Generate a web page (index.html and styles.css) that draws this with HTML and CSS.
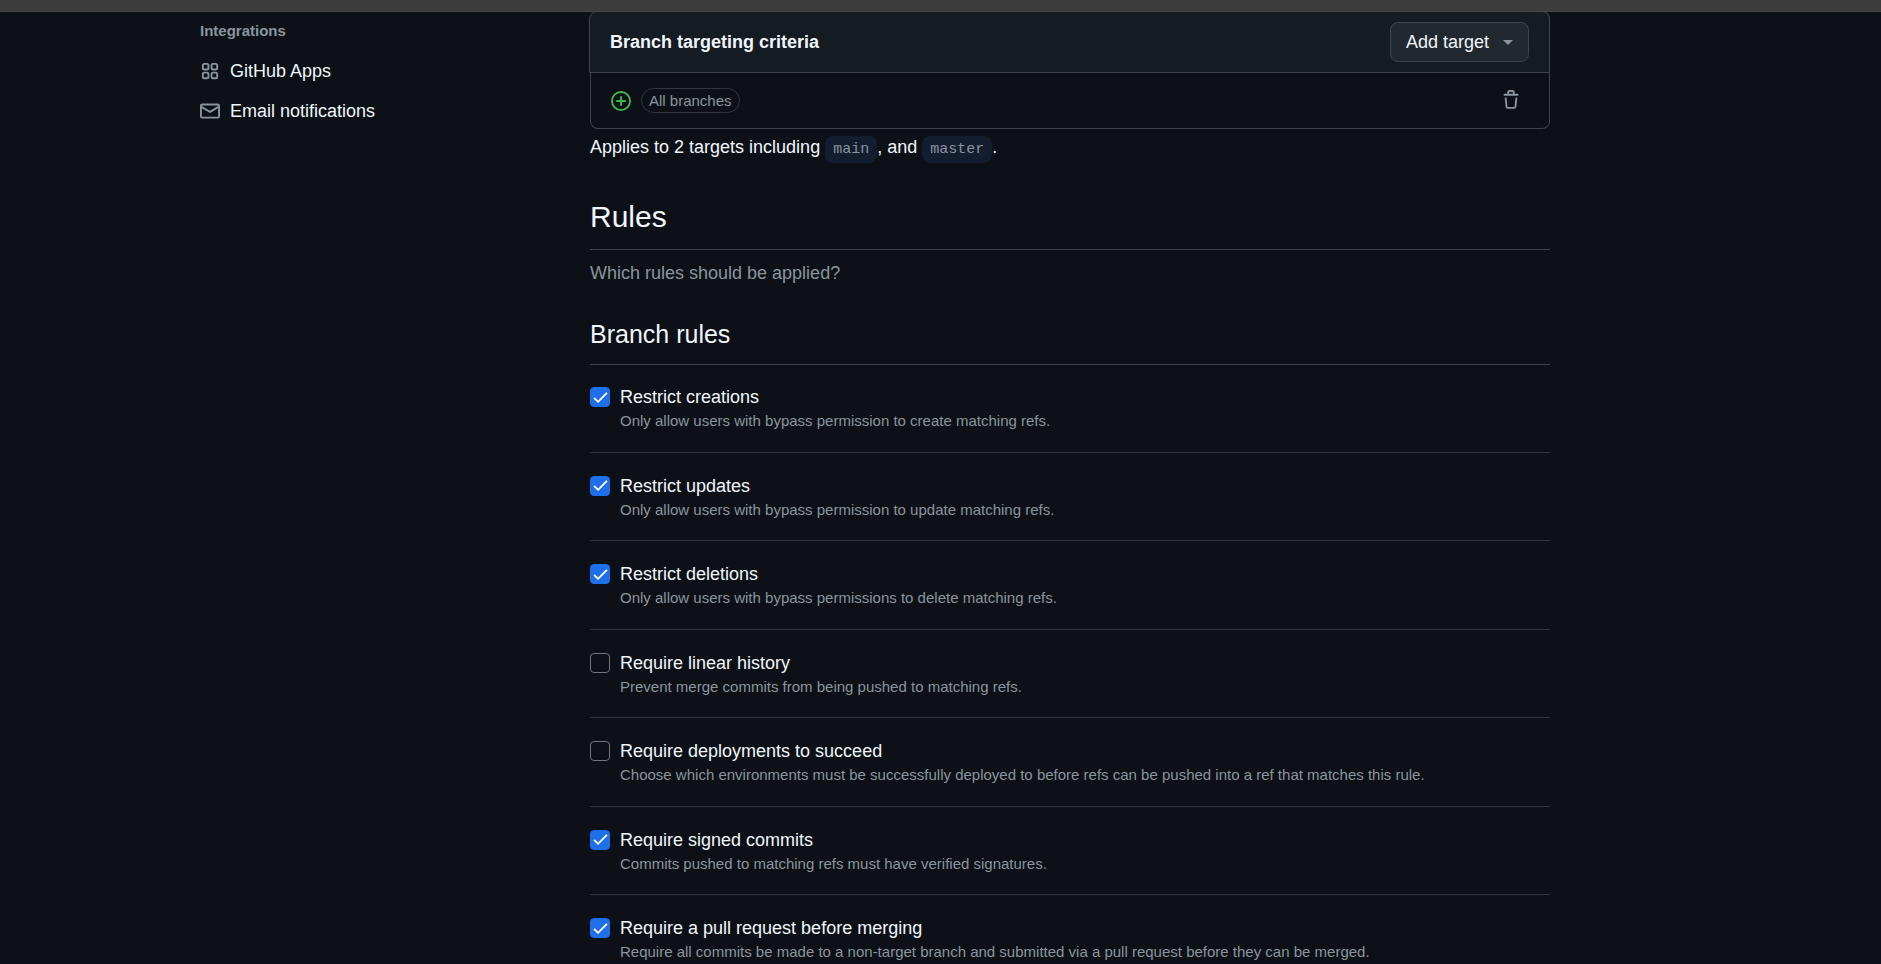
FILE: index.html
```html
<!DOCTYPE html>
<html lang="en">
<head>
<meta charset="utf-8">
<meta name="viewport" content="width=device-width, initial-scale=1">
<title>Rulesets</title>
<link rel="stylesheet" href="styles.css">
</head>
<body>
<div class="topbar"></div>
<div class="layout">
  <nav class="sidebar" aria-labelledby="nav-title">
    <h2 class="nav-title" id="nav-title">Integrations</h2>
    <ul class="nav-list">
      <li><a class="nav-item" href="#apps">
        <svg class="icon" viewBox="0 0 16 16" aria-hidden="true"><path d="M1.5 3.25c0-.966.784-1.75 1.75-1.75h2.5c.966 0 1.75.784 1.75 1.75v2.5A1.75 1.75 0 0 1 5.75 7.5h-2.5A1.75 1.75 0 0 1 1.5 5.75Zm7 0c0-.966.784-1.75 1.75-1.75h2.5c.966 0 1.75.784 1.75 1.75v2.5a1.75 1.75 0 0 1-1.75 1.75h-2.5A1.75 1.75 0 0 1 8.5 5.75Zm-7 7c0-.966.784-1.75 1.75-1.75h2.5c.966 0 1.75.784 1.75 1.75v2.5a1.75 1.75 0 0 1-1.75 1.75h-2.5a1.75 1.75 0 0 1-1.75-1.75Zm7 0c0-.966.784-1.75 1.75-1.75h2.5c.966 0 1.75.784 1.75 1.75v2.5a1.75 1.75 0 0 1-1.75 1.75h-2.5a1.75 1.75 0 0 1-1.75-1.75ZM3.25 3a.25.25 0 0 0-.25.25v2.5c0 .138.112.25.25.25h2.5A.25.25 0 0 0 6 5.75v-2.5A.25.25 0 0 0 5.75 3Zm7 0a.25.25 0 0 0-.25.25v2.5c0 .138.112.25.25.25h2.5a.25.25 0 0 0 .25-.25v-2.5a.25.25 0 0 0-.25-.25Zm-7 7a.25.25 0 0 0-.25.25v2.5c0 .138.112.25.25.25h2.5a.25.25 0 0 0 .25-.25v-2.5a.25.25 0 0 0-.25-.25Zm7 0a.25.25 0 0 0-.25.25v2.5c0 .138.112.25.25.25h2.5a.25.25 0 0 0 .25-.25v-2.5a.25.25 0 0 0-.25-.25Z"/></svg>
        <span>GitHub Apps</span></a></li>
      <li><a class="nav-item" href="#email">
        <svg class="icon" viewBox="0 0 16 16" aria-hidden="true"><path d="M1.75 2h12.5c.966 0 1.75.784 1.75 1.75v8.5A1.75 1.75 0 0 1 14.25 14H1.75A1.75 1.75 0 0 1 0 12.25v-8.5C0 2.784.784 2 1.75 2ZM1.5 12.251c0 .138.112.25.25.25h12.5a.25.25 0 0 0 .25-.25V5.809L8.38 9.397a.75.75 0 0 1-.76 0L1.5 5.809v6.442Zm13-8.181v-.32a.25.25 0 0 0-.25-.25H1.75a.25.25 0 0 0-.25.25v.32L8 7.88Z"/></svg>
        <span>Email notifications</span></a></li>
    </ul>
  </nav>

  <main class="content">
    <section class="targets">
      <header class="targets-header">
        <h3 class="targets-title">Branch targeting criteria</h3>
        <button class="button" type="button">Add target<span class="caret"></span></button>
      </header>
      <div class="target">
        <svg class="icon icon-include" viewBox="0 0 16 16" aria-hidden="true"><path d="M8 0a8 8 0 1 1 0 16A8 8 0 0 1 8 0ZM1.5 8a6.5 6.5 0 1 0 13 0 6.5 6.5 0 0 0-13 0Zm7.25-3.25v2.5h2.5a.75.75 0 0 1 0 1.5h-2.5v2.5a.75.75 0 0 1-1.5 0v-2.5h-2.5a.75.75 0 0 1 0-1.5h2.5v-2.5a.75.75 0 0 1 1.5 0Z"/></svg>
        <span class="label">All branches</span>
        <button class="icon-button" type="button" aria-label="Delete target">
          <svg class="icon" viewBox="0 0 16 16" aria-hidden="true"><path d="M11 1.75V3h2.25a.75.75 0 0 1 0 1.5H2.75a.75.75 0 0 1 0-1.5H5V1.75C5 .784 5.784 0 6.75 0h2.5C10.216 0 11 .784 11 1.75ZM4.496 6.675l.66 6.6a.25.25 0 0 0 .249.225h5.19a.25.25 0 0 0 .249-.225l.66-6.6a.75.75 0 0 1 1.492.149l-.66 6.6A1.748 1.748 0 0 1 10.595 15h-5.19a1.75 1.75 0 0 1-1.741-1.575l-.66-6.6a.75.75 0 1 1 1.492-.15ZM6.5 1.75V3h3V1.75a.25.25 0 0 0-.25-.25h-2.5a.25.25 0 0 0-.25.25Z"/></svg>
        </button>
      </div>
    </section>
    <p class="applies">Applies to 2 targets including <code class="branch">main</code>, and <code class="branch">master</code>.</p>

    <h1 class="heading">Rules</h1>
    <p class="subtitle">Which rules should be applied?</p>

    <h2 class="subheading">Branch rules</h2>
    <ul class="rules">
      <li class="rule">
        <input class="check" type="checkbox" id="creations" aria-describedby="creations-note" checked>
        <div><label class="rule-name" for="creations">Restrict creations</label>
        <p class="note" id="creations-note">Only allow users with bypass permission to create matching refs.</p></div>
      </li>
      <li class="rule">
        <input class="check" type="checkbox" id="updates" aria-describedby="updates-note" checked>
        <div><label class="rule-name" for="updates">Restrict updates</label>
        <p class="note" id="updates-note">Only allow users with bypass permission to update matching refs.</p></div>
      </li>
      <li class="rule">
        <input class="check" type="checkbox" id="deletions" aria-describedby="deletions-note" checked>
        <div><label class="rule-name" for="deletions">Restrict deletions</label>
        <p class="note" id="deletions-note">Only allow users with bypass permissions to delete matching refs.</p></div>
      </li>
      <li class="rule">
        <input class="check" type="checkbox" id="linear" aria-describedby="linear-note">
        <div><label class="rule-name" for="linear">Require linear history</label>
        <p class="note" id="linear-note">Prevent merge commits from being pushed to matching refs.</p></div>
      </li>
      <li class="rule">
        <input class="check" type="checkbox" id="deployments" aria-describedby="deployments-note">
        <div><label class="rule-name" for="deployments">Require deployments to succeed</label>
        <p class="note" id="deployments-note">Choose which environments must be successfully deployed to before refs can be pushed into a ref that matches this rule.</p></div>
      </li>
      <li class="rule">
        <input class="check" type="checkbox" id="signed" aria-describedby="signed-note" checked>
        <div><label class="rule-name" for="signed">Require signed commits</label>
        <p class="note" id="signed-note">Commits pushed to matching refs must have verified signatures.</p></div>
      </li>
      <li class="rule">
        <input class="check" type="checkbox" id="pull" aria-describedby="pull-note" checked>
        <div><label class="rule-name" for="pull">Require a pull request before merging</label>
        <p class="note" id="pull-note">Require all commits be made to a non-target branch and submitted via a pull request before they can be merged.</p></div>
      </li>
    </ul>
  </main>
</div>
</body>
</html>
```

FILE: styles.css
```css
:root {
  --bg: #0d1117;
  --bg-subtle: #151b22;
  --fg: #f0f6fc;
  --fg-muted: #8b949e;
  --border: #3d444d;
  --border-muted: #30363d;
  --success: #3fb950;
  --accent: #1f6feb;
}

* {
  box-sizing: border-box;
}

html {
  background: var(--bg);
  scrollbar-width: none;
}

body {
  margin: 0;
  background: var(--bg);
  color: var(--fg);
  font-family: "Liberation Sans", Arial, sans-serif;
  font-size: 18px;
  line-height: 26px;
}

h1, h2, h3, p, ul {
  margin: 0;
  padding: 0;
}

ul {
  list-style: none;
}

.topbar {
  position: sticky;
  top: 0;
  z-index: 1;
  height: 12px;
  background: #3c3c3c;
  border-bottom: 1px solid #474747;
}

.layout {
  display: grid;
  grid-template-columns: 370px minmax(0, 960px);
  column-gap: 40px;
  max-width: 1601px;
  margin: 0 auto;
  padding: 0 40px;
}

.icon {
  flex: none;
  width: 20px;
  height: 20px;
  fill: currentColor;
}

/* Sidebar */

.sidebar {
  padding: 7px 20px;
}

.nav-title {
  margin-bottom: 9px;
  color: var(--fg-muted);
  font-size: 15px;
  line-height: 23px;
}

.nav-item {
  display: flex;
  align-items: center;
  gap: 10px;
  height: 40px;
  color: var(--fg);
  text-decoration: none;
}

.nav-item .icon {
  color: var(--fg-muted);
}

/* Targets */

.targets {
  margin-top: -1px;
  border: 1px solid var(--border);
  border-top: 0;
  border-radius: 8px;
}

.targets-header {
  display: flex;
  align-items: center;
  justify-content: space-between;
  margin: 0 -1px 0 -2px;
  padding: 10px 20px;
  background: var(--bg-subtle);
  border: 1px solid var(--border);
  border-radius: 8px 8px 0 0;
}

.targets-title {
  font-size: 18px;
}

.button {
  display: flex;
  align-items: center;
  gap: 14px;
  height: 40px;
  padding: 0 15px;
  background: #21282f;
  border: 1px solid var(--border);
  border-radius: 8px;
  color: var(--fg);
  font: inherit;
}

.caret {
  border: 5px solid transparent;
  border-top-color: var(--fg-muted);
  border-bottom: 0;
}

.target {
  display: flex;
  align-items: center;
  gap: 10px;
  height: 55px;
  padding: 0 20px;
}

.icon-include {
  color: var(--success);
}

.label {
  padding: 0 7px;
  border: 1px solid #30363d;
  border-radius: 24px;
  color: var(--fg-muted);
  font-size: 15px;
  line-height: 23px;
}

.icon-button {
  display: flex;
  margin-left: auto;
  padding: 7px 8px 9px;
  background: none;
  border: 0;
  color: var(--fg-muted);
}

.applies {
  margin-top: 5px;
}

.branch {
  padding: 5px 8px;
  background: #121d2f;
  border-radius: 8px;
  color: var(--fg-muted);
  font-family: "Liberation Mono", "Courier New", monospace;
  font-size: 15px;
}

/* Rules */

.heading,
.subheading {
  border-bottom: 1px solid var(--border);
  font-weight: 400;
}

.heading {
  margin-top: 31px;
  padding-bottom: 10px;
  font-size: 30px;
  line-height: 45px;
}

.subtitle {
  margin-top: 10px;
  color: var(--fg-muted);
}

.subheading {
  margin-top: 29px;
  padding-bottom: 11px;
  font-size: 25px;
  line-height: 38px;
}

.rules {
  margin-top: -1px;
}

.rule {
  display: flex;
  gap: 10px;
  padding: 20px 0 19px;
  border-bottom: 1px solid var(--border-muted);
}

.rule-name {
  display: block;
}

.note {
  color: var(--fg-muted);
  font-size: 15px;
  line-height: 1.5;
}

.check {
  flex: none;
  width: 20px;
  height: 20px;
  margin: 3px 0 0;
  appearance: none;
  border: 1px solid #6e7681;
  border-radius: 4px;
}

.check:checked {
  border-color: var(--accent);
  background: var(--accent) url("data:image/svg+xml,%3Csvg xmlns='http://www.w3.org/2000/svg' viewBox='0 0 12 9'%3E%3Cpath d='M.75 4.75 4 8 11.25.75' fill='none' stroke='white' stroke-width='1.5'/%3E%3C/svg%3E") center / 15px 11px no-repeat;
}
```
